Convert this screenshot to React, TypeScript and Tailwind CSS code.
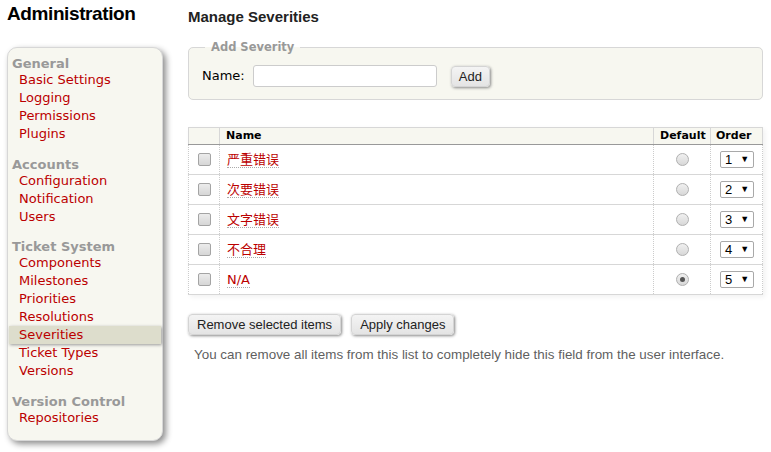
import React from 'react'

const groups = [
  { title: 'General', items: ['Basic Settings', 'Logging', 'Permissions', 'Plugins'] },
  { title: 'Accounts', items: ['Configuration', 'Notification', 'Users'] },
  {
    title: 'Ticket System',
    items: ['Components', 'Milestones', 'Priorities', 'Resolutions', 'Severities', 'Ticket Types', 'Versions'],
  },
  { title: 'Version Control', items: ['Repositories'] },
]

const severities = [
  { name: '严重错误', order: 1, isDefault: false },
  { name: '次要错误', order: 2, isDefault: false },
  { name: '文字错误', order: 3, isDefault: false },
  { name: '不合理', order: 4, isDefault: false },
  { name: 'N/A', order: 5, isDefault: true },
]

function Checkbox() {
  return (
    <div className="w-[13px] h-[13px] rounded-[2px] border border-[#a4a4a4] bg-gradient-to-b from-[#ececec] to-[#d6d6d6]" />
  )
}

function Radio({ checked }: { checked: boolean }) {
  return (
    <div className="w-[13px] h-[13px] rounded-full border border-[#b0b0b0] bg-gradient-to-b from-[#f0f0f0] to-[#d8d8d8] flex items-center justify-center">
      {checked && <div className="w-[5px] h-[5px] rounded-full bg-[#555]" />}
    </div>
  )
}

function OrderSelect({ value }: { value: number }) {
  return (
    <div className="w-[34px] h-[17px] border border-[#a9a9a9] rounded-[2px] bg-white flex items-center pl-[4px] font-['Liberation_Sans',sans-serif] text-[13px] text-black leading-none">
      <span>{value}</span>
      <span className="ml-[8px] text-[9px]">▼</span>
    </div>
  )
}

function Button({ children }: { children: React.ReactNode }) {
  return (
    <button className="h-[21px] px-[8px] bg-gradient-to-b from-[#f4f4f4] to-[#e4e4e4] border border-[#d4d4d4] rounded-[4px] shadow-[1px_1px_3px_#888] font-['Liberation_Sans',sans-serif] text-[13px] text-[#222] leading-none">
      {children}
    </button>
  )
}

export default function App() {
  return (
    <div className="flex bg-white min-h-[452px] font-['DejaVu_Sans','Noto_Sans_CJK_SC',sans-serif] text-[13px] text-black">
      <div className="w-[188px] shrink-0 pl-[7px] pt-[2px]">
        <h1 className="font-['Liberation_Sans',sans-serif] text-[19px] font-bold leading-[24px] tracking-[-0.4px]">
          Administration
        </h1>
        <nav className="mt-[21px] w-[156px] bg-[#f7f7f0] border border-[#d7d7d7] rounded-[10px] shadow-[3px_3px_6px_rgba(0,0,0,0.45)] pt-[8px] pb-[13px]">
          {groups.map((group, gi) => (
            <div key={group.title} className={gi < groups.length - 1 ? 'mb-[13.5px]' : ''}>
              <div className="pl-[4px] leading-[15px] font-bold text-[#999]">{group.title}</div>
              {group.items.map((item) =>
                item === 'Severities' ? (
                  <div
                    key={item}
                    className="mx-[1px] pl-[10px] leading-[18px] bg-[#ddddcc] shadow-[1px_1px_3px_#999] text-[#b00]"
                  >
                    {item}
                  </div>
                ) : (
                  <div key={item} className="pl-[11px] leading-[18px] text-[#b00]">
                    {item}
                  </div>
                )
              )}
            </div>
          ))}
        </nav>
      </div>

      <div className="w-[575px] pt-[7px]">
        <h2 className="font-['Liberation_Sans',sans-serif] text-[15px] font-bold leading-[20px] text-[#222]">
          Manage Severities
        </h2>

        <fieldset className="mt-[13px] bg-[#f7f7f0] border border-[#d7d7d7] rounded-[5px] px-[13px] pt-[11px] pb-[12px]">
          <legend className="ml-[3px] px-[6px] text-[11.5px] font-bold text-[#999] leading-[14px]">Add Severity</legend>
          <div className="flex items-center">
            <span className="mr-[8px]">Name:</span>
            <input className="w-[184px] h-[22px] bg-white border border-[#ccc] rounded-[3px]" />
            <div className="ml-[14px]">
              <button className="h-[21px] px-[7px] bg-gradient-to-b from-[#f4f4f4] to-[#e4e4e4] border border-[#d4d4d4] rounded-[4px] shadow-[1px_1px_3px_#888] font-['Liberation_Sans',sans-serif] text-[13px] text-[#222] leading-none">
                Add
              </button>
            </div>
          </div>
        </fieldset>

        <div className="mt-[27px] shadow-[2px_2px_5px_rgba(0,0,0,0.06)]">
          <div className="grid grid-cols-[31px_434px_57px_53px] h-[18px] bg-[#f7f7f0] border-t border-[#d7d7d7] border-b border-b-[#999] text-[11px] font-bold leading-[16px]">
            <div className="border-l border-[#d7d7d7]" />
            <div className="border-l border-[#d7d7d7] pl-[6px]">Name</div>
            <div className="border-l border-[#d7d7d7] pl-[6px]">Default</div>
            <div className="border-l border-r border-[#d7d7d7] pl-[5px]">Order</div>
          </div>
          {severities.map((s) => (
            <div
              key={s.name}
              className="grid grid-cols-[31px_434px_57px_53px] h-[30px] border-b border-[#d7d7d7]"
            >
              <div className="border-l border-dotted border-[#ccc] flex items-center justify-center">
                <Checkbox />
              </div>
              <div className="border-l border-dotted border-[#ccc] pl-[7px] flex items-center">
                <span className="text-[#b00] border-b border-dotted border-[#aaa] leading-[15px]">{s.name}</span>
              </div>
              <div className="border-l border-dotted border-[#ccc] flex items-center justify-center">
                <Radio checked={s.isDefault} />
              </div>
              <div className="border-l border-r border-dotted border-[#ccc] flex items-center pl-[9px]">
                <OrderSelect value={s.order} />
              </div>
            </div>
          ))}
        </div>

        <div className="mt-[19px] flex gap-[10px]">
          <Button>Remove selected items</Button>
          <Button>Apply changes</Button>
        </div>

        <p className="mt-[12px] ml-[6px] font-['Liberation_Sans',sans-serif] text-[13.4px] leading-[16px] text-[#5f5f5f]">
          You can remove all items from this list to completely hide this field from the user interface.
        </p>
      </div>
    </div>
  )
}
